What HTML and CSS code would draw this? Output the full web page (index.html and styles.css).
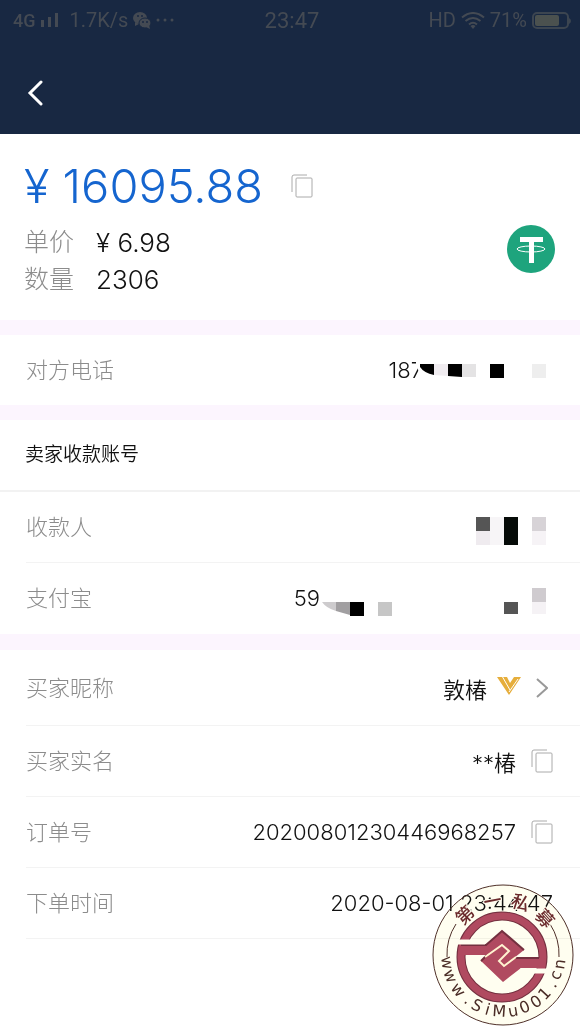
FILE: index.html
```html
<!DOCTYPE html>
<html lang="zh-CN">
<head>
<meta charset="UTF-8">
<meta name="viewport" content="width=device-width, initial-scale=1">
<title>订单详情</title>
<link rel="stylesheet" href="styles.css">
</head>
<body>

<svg width="0" height="0" class="defs" aria-hidden="true">
  <symbol id="copy" viewBox="0 0 22 24">
    <path d="M1 18V3Q1 1 3 1H16" />
    <rect x="5" y="4" width="16" height="19" rx="1" />
  </symbol>
</svg>

<header class="header">
  <div class="status">
    <div class="status-left">
      <span class="net">4G</span>
      <svg class="signal" width="18" height="14" viewBox="0 0 18 14">
        <path d="M0 7h3v7H0zM7 4h3v10H7zM14 0h3v14h-3z" />
      </svg>
      <span class="speed">1.7K/s</span>
      <svg class="wechat" width="18" height="17" viewBox="0 0 18 17">
        <ellipse cx="7" cy="6" rx="7" ry="6" />
        <path d="M2 10l0 4 4-2z" />
        <ellipse class="front" cx="12" cy="11" rx="6" ry="5" />
        <path d="M13 15l4 2-1-4z" />
        <g class="eyes">
          <circle cx="5" cy="4" r="1" /><circle cx="9" cy="4" r="1" />
          <circle cx="10" cy="10" r="1" /><circle cx="14" cy="10" r="1" />
        </g>
      </svg>
      <svg class="dots" width="18" height="4" viewBox="0 0 18 4">
        <circle cx="2" cy="2" r="1.500" /><circle cx="9" cy="2" r="1.500" /><circle cx="16" cy="2" r="1.500" />
      </svg>
    </div>
    <time class="clock">23:47</time>
    <div class="status-right">
      <span class="hd">HD</span>
      <svg class="wifi" width="24" height="17" viewBox="0 0 24 17">
        <path d="M1 5.500Q12-3.500 23 5.500M4.500 9Q12 3 19.500 9M8 12.500Q12 9 16 12.500" />
        <path class="solid" d="M9.500 14Q12 12 14.500 14L12 17z" />
      </svg>
      <span class="percent">71%</span>
      <svg class="battery" width="39" height="17" viewBox="0 0 39 17">
        <rect class="shell" x="1" y="1" width="35" height="15" rx="4" />
        <rect class="level" x="3" y="3" width="24" height="11" rx="2" />
        <path class="tip" d="M37 6q2 1 2 3t-2 3z" />
      </svg>
    </div>
  </div>
  <nav class="nav">
    <button class="back" type="button" aria-label="返回">
      <svg width="16" height="26" viewBox="0 0 16 26"><path d="M14 2L3 13l11 11" /></svg>
    </button>
  </nav>
</header>

<main>
  <section class="summary">
    <div class="total">
      <span class="amount">¥ 16095.88</span>
      <button class="copy" type="button" aria-label="复制金额"><svg width="22" height="24"><use href="#copy" /></svg></button>
    </div>
    <div class="detail">
      <dl class="facts">
        <dt>单价</dt>
        <dd>¥ 6.98</dd>
        <dt>数量</dt>
        <dd>2306</dd>
      </dl>
      <svg class="coin" width="50" height="50" viewBox="0 0 50 50">
        <circle cx="25" cy="25" r="24" />
        <path class="t" d="M14 13h23v5h-9v21h-5V18h-9z" />
        <ellipse cx="25" cy="25" rx="14" ry="3" />
      </svg>
    </div>
  </section>

  <dl class="group phone">
    <div class="row">
      <dt>对方电话</dt>
      <dd class="masked">
        <span class="num">187</span>
        <svg class="phone-mask" width="133" height="20" viewBox="0 0 133 20">
          <path fill="#fff" d="M3 0h130v20H9L7 14 3 5z" />
          <path fill="#000" d="M7 4h14v11Q11 13 7 7z" />
          <path fill="#f0ecf0" d="M21 4h14v12l-14-1z" />
          <path fill="#000" d="M35 4h14v13l-14-1z" />
          <path fill="#e4e3e4" d="M49 4h14v13H49z" />
          <path fill="#000" d="M77 4h14v14H77z" />
          <path fill="#eee" d="M119 4h14v14h-14z" />
        </svg>
      </dd>
    </div>
  </dl>

  <section class="group">
    <h2 class="title">卖家收款账号</h2>
    <dl class="rows">
      <div class="row">
        <dt>收款人</dt>
        <dd class="masked">
          <svg class="mosaic" width="70" height="28" viewBox="0 0 70 28">
            <path fill="#555" d="M0 0h14v14H0z" />
            <path fill="#efebef" d="M0 14h14v14H0z" />
            <path fill="#f7f5f7" d="M14 0h14v28H14z" />
            <path fill="#060b08" d="M28 0h14v28H28z" />
            <path fill="#d7d3d7" d="M56 0h14v14H56z" />
            <path fill="#f6f3f6" d="M56 14h14v14H56z" />
          </svg>
        </dd>
      </div>
      <div class="row">
        <dt>支付宝</dt>
        <dd class="masked">
          <span class="num">59</span>
          <svg class="mosaic" width="224" height="28" viewBox="0 0 224 28">
            <path fill="#cdcbcd" d="M0 14h14v9Q4 20 0 14z" />
            <path fill="#a19fa1" d="M14 14h14v13l-14-4z" />
            <path fill="#000" d="M28 14h14v14H28z" />
            <path fill="#c6c6c6" d="M56 14h14v14H56z" />
            <path fill="#555" d="M182 14h14v12h-14z" />
            <path fill="#cfcbcf" d="M210 0h14v14h-14z" />
            <path fill="#f5f2f5" d="M210 14h14v12h-14z" />
          </svg>
        </dd>
      </div>
    </dl>
  </section>

  <dl class="group order">
    <div class="row buyer">
      <dt>买家昵称</dt>
      <dd>
        <a class="name" href="#buyer">敦椿
          <svg class="vip" width="24" height="20" viewBox="0 0 24 20">
            <path d="M0 1H10L13 7 17 1H24L12 19z" />
            <path class="slit" d="M5 0L13 14M21 3L12 16" />
          </svg>
          <svg class="arrow" width="12" height="20" viewBox="0 0 12 20"><path d="M1 1l10 9-10 9" /></svg>
        </a>
      </dd>
    </div>
    <div class="row">
      <dt>买家实名</dt>
      <dd>
        <span class="name">**椿</span>
        <button class="copy" type="button" aria-label="复制实名"><svg width="22" height="24"><use href="#copy" /></svg></button>
      </dd>
    </div>
    <div class="row">
      <dt>订单号</dt>
      <dd>
        <span class="num">20200801230446968257</span>
        <button class="copy" type="button" aria-label="复制订单号"><svg width="22" height="24"><use href="#copy" /></svg></button>
      </dd>
    </div>
    <div class="row">
      <dt>下单时间</dt>
      <dd><time class="num">2020-08-01 23:44:47</time></dd>
    </div>
  </dl>
</main>

<svg class="seal" width="142" height="142" viewBox="-1 -1 142 142">
  <circle class="paper" cx="70" cy="70" r="70" />
  <circle class="edge" cx="70" cy="70" r="70" />
  <path class="edge" d="M14 72A56 56 0 0 1 23 39M117 39A56 56 0 0 1 126 72" />
  <circle class="ring-halo" cx="69" cy="72" r="41" />
  <circle class="ring-shade" cx="69" cy="72" r="41" />
  <circle class="ring" cx="69" cy="72" r="41" />
  <path class="knot" d="M27 60H53L69 46L91 65L81 73H112L110 83H88L70 97L48 76L54 70H26z" />
  <path class="shade" d="M28 60H53L69 46L91 65M48 76L54 70M81 73H106" />
  <path class="channel" d="M52 72L69 60L76 66L66 76L71 81L83 72" />
  <path class="gap" d="M20 57H52M87 86H118" />
  <text class="seal-name" x="30 52 77 101" y="41 24 21 31" rotate="-44 -11 18 48">第一私募</text>
  <text class="seal-site" x="8 10 17 30 37 51 59 76 89 102 112 122 126 131" y="72 87 103 117 123 129 131 132 129 124 116 104 96 85" rotate="82 68 52 38 27 16 4 -10 -22 -35 -47 -59 -69 -81">www.SiMu001.cn</text>
</svg>

</body>
</html>
```

FILE: styles.css
```css
body {
  margin: 0;
  min-height: 100vh;
  position: relative;
  background-color: #fff;
  color: #111;
  font-family: Inter, "Noto Sans CJK SC", sans-serif;
  font-weight: 300;
}

dl, dd, h2 {
  margin: 0;
}

button {
  padding: 0;
  border: none;
  background: none;
  cursor: pointer;
}

svg {
  display: block;
  flex: none;
}

.defs {
  position: absolute;
}

/* header */
.header {
  background-color: #182842;
  color: #444a53;
}

.status {
  display: grid;
  grid-template-columns: 1fr auto 1fr;
  align-items: center;
  height: 40px;
  padding: 0 9px 0 13px;
  font-family: Roboto, sans-serif;
  font-weight: 400;
  font-size: 20px;
}

.status-left, .status-right {
  display: flex;
  align-items: center;
  gap: 5px;
}

.status-right {
  justify-content: flex-end;
}

.net {
  font-size: 18px;
  font-weight: 500;
}

.speed {
  margin-left: 6px;
}

.clock {
  font-size: 22px;
}

.signal, .wechat, .dots {
  fill: #444a53;
}

.wechat .front {
  stroke: #182842;
}

.wechat .eyes {
  fill: #182842;
}

.wifi {
  fill: none;
  stroke: #444a53;
  stroke-width: 2;
}

.wifi .solid {
  fill: #444a53;
  stroke: none;
}

.battery .shell {
  fill: none;
  stroke: #3c4550;
  stroke-width: 2;
}

.battery .level {
  fill: #4b514f;
}

.battery .tip {
  fill: #3c4550;
}

.nav {
  padding: 40px 27px 28px;
}

.back {
  display: block;
}

.back path {
  fill: none;
  stroke: #fff;
  stroke-width: 3;
  stroke-linecap: round;
}

/* amount */
.summary {
  padding: 22px 24px;
}

.total {
  display: flex;
  align-items: center;
  gap: 28px;
}

.amount {
  color: #1565cf;
  font-size: 47px;
  line-height: 60px;
}

.copy svg {
  fill: none;
  stroke: #aaa;
  stroke-width: 1;
}

.detail {
  display: flex;
  align-items: flex-start;
  justify-content: space-between;
  margin-top: 8px;
}

.facts {
  display: grid;
  grid-template-columns: auto auto;
  column-gap: 22px;
  font-size: 26px;
  line-height: 37px;
}

.facts dt {
  font-size: 25px;
}

dt {
  color: #8c8c8c;
  font-size: 22px;
}

.coin circle {
  fill: #1ea47d;
}

.coin .t {
  fill: #fff;
}

.coin ellipse {
  fill: none;
  stroke: #fff;
}

/* rows */
.group {
  border-top: 15px solid #fcf5fe;
}

.phone, .rows, .order {
  padding-left: 26px;
}

.order {
  border-top-width: 16px;
}

.title {
  padding: 0 25px;
  border-bottom: 2px solid #f2f2f2;
  font-size: 19px;
  font-weight: 350;
  line-height: 70px;
}

.row {
  display: flex;
  align-items: center;
  justify-content: space-between;
  height: 70px;
  padding-right: 27px;
  border-bottom: 1px solid #f3f3f3;
}

.row dt {
  padding-bottom: 4px;
}

.phone .row {
  border-bottom: none;
}

.rows .row:last-child {
  border-color: #fff;
}

.row dd, .name {
  display: flex;
  align-items: center;
}

.row dd {
  gap: 15px;
}

.row .masked {
  gap: 2px;
  padding-right: 7px;
}

.buyer {
  height: 75px;
}

.num {
  font-size: 22px;
}

.name {
  gap: 10px;
  color: #111;
  font-size: 22px;
  font-weight: 350;
  text-decoration: none;
}

.mosaic {
  margin-top: 8px;
}

/* the mask covers the end of the last digit */
.phone-mask {
  margin-left: -12px;
  z-index: 1;
}

.vip {
  margin-bottom: 4px;
  fill: #e6ae3c;
}

.vip .slit {
  fill: none;
  stroke: #fff;
}

.arrow {
  margin: 0 5px;
  fill: none;
  stroke: #999;
  stroke-width: 2;
}

/* seal over the bottom corner */
.seal {
  position: absolute;
  right: 6px;
  bottom: 5px;
  fill: none;
  pointer-events: none;
}

.paper {
  fill: #fffef0;
  mix-blend-mode: multiply;
}

.edge {
  stroke: #4f3029;
  stroke-width: 1;
}

.ring-halo {
  stroke: #fffef0;
  stroke-width: 11;
}

.ring-shade {
  stroke: #74303f;
  stroke-width: 9;
}

.ring {
  stroke: #b04a60;
  stroke-width: 7;
}

.knot {
  fill: #b04a60;
}

.shade {
  stroke: #74303f;
  stroke-width: 2;
}

.channel {
  stroke: #fff3d0;
  stroke-width: 2;
}

.gap {
  stroke: #fffef0;
  stroke-width: 5;
}

.seal-name {
  fill: #6b2a2c;
  stroke: #fffef0;
  stroke-width: 2;
  paint-order: stroke;
  font-family: "Noto Sans CJK SC", sans-serif;
  font-size: 18px;
  font-weight: 500;
}

.seal-site {
  fill: #4a2c26;
  font-family: "DejaVu Sans", sans-serif;
  font-size: 16px;
  font-weight: 400;
}
```
